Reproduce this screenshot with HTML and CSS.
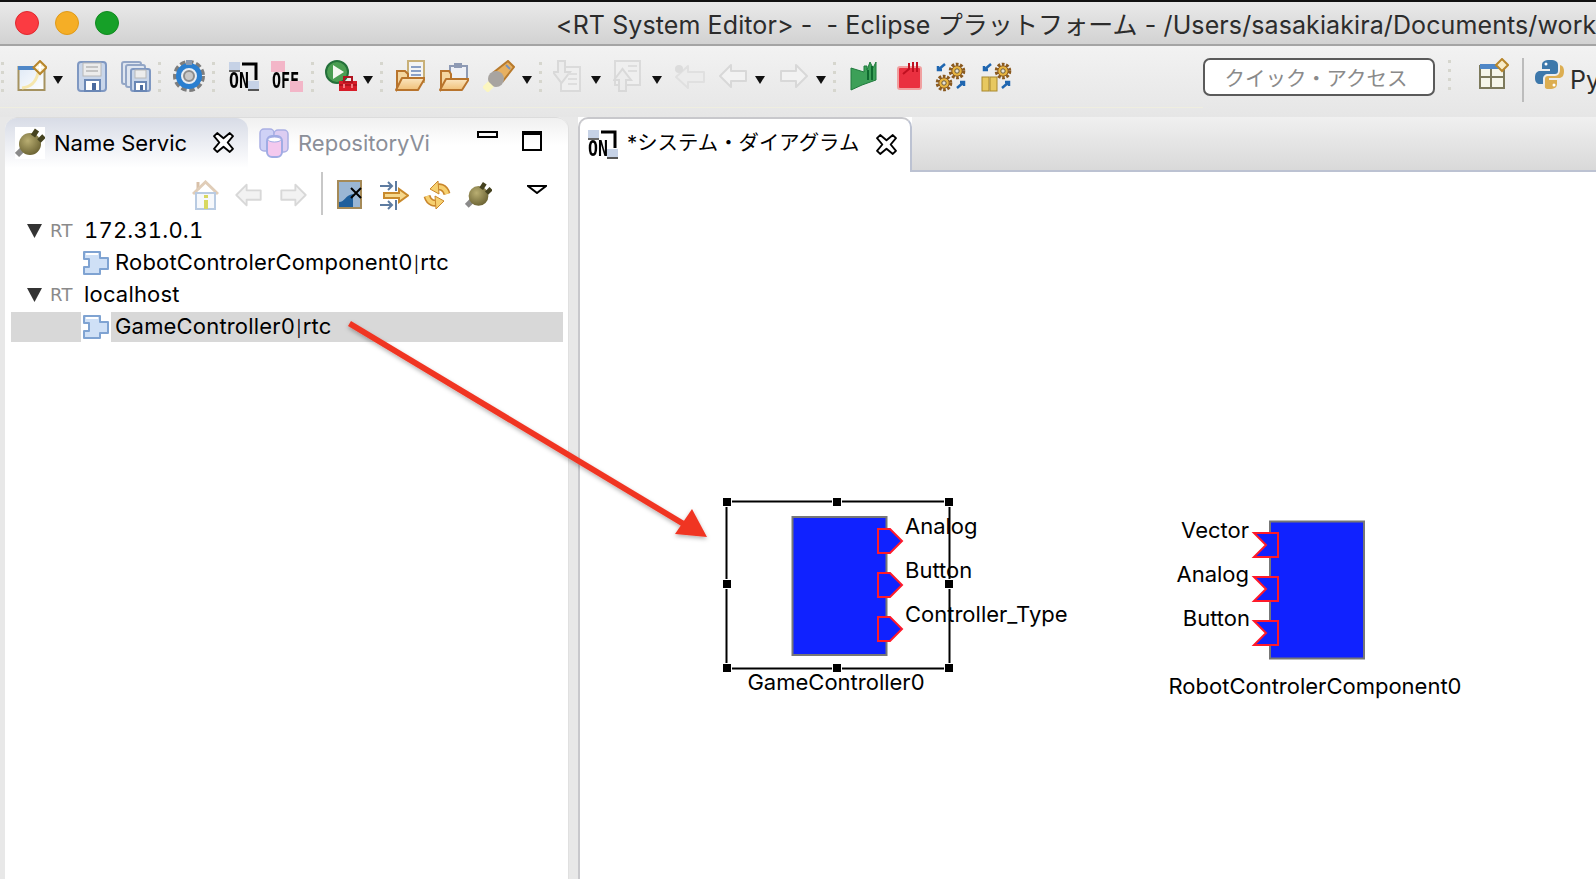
FILE: index.html
```html
<!DOCTYPE html>
<html lang="ja">
<head>
<meta charset="utf-8">
<title>RT System Editor</title>
<link rel="stylesheet" href="styles.css">
</head>
<body>
<svg class="sprite" width="0" height="0">
  <defs>
    <linearGradient id="gWin" x1="0" y1="0" x2="1" y2="1"><stop offset="0" stop-color="#dfe9f6"/><stop offset="1" stop-color="#fff"/></linearGradient>
    <linearGradient id="gFold" x1="0" y1="0" x2="0" y2="1"><stop offset="0" stop-color="#fbe6c0"/><stop offset="1" stop-color="#f0c078"/></linearGradient>
    <radialGradient id="gPlug" cx=".4" cy=".35" r=".8"><stop offset="0" stop-color="#b9ae72"/><stop offset="1" stop-color="#5e5628"/></radialGradient>
    <symbol id="close" viewBox="0 0 20 20"><path d="M4 1 10 6 16 1 19 4 14 10 19 16 16 19 10 14 4 19 1 16 6 10 1 4Z" fill="#fff" stroke="#000" stroke-width="1.800" stroke-linejoin="round"/></symbol>
    <symbol id="plug" viewBox="0 0 30 30">
      <path d="M9 20 2 27" stroke="#8a8a8a" stroke-width="6"/>
      <circle cx="15" cy="16" r="11" fill="url(#gPlug)"/>
      <path d="M18 8 22 2M24 13 29 8" stroke="#45421f" stroke-width="5"/>
    </symbol>
    <symbol id="on" viewBox="0 0 30 32">
      <rect x="0" y="2" width="11" height="9" fill="#c6d2e6"/><rect x="0" y="10" width="11" height="2" fill="#666"/>
      <path d="M13 4H27V20" fill="none" stroke="#000" stroke-width="3"/>
      <text transform="translate(0 28) scale(1.100 1.450)" class="icon-text">ON</text>
      <rect x="19" y="21" width="11" height="9" fill="#c6d2e6"/><rect x="19" y="29" width="11" height="2" fill="#555"/>
    </symbol>
    <symbol id="la" viewBox="0 0 30 32"><path d="M13 5 2 16 13 27V21H28V11H13Z" fill="#f2f2f2" stroke="#d8d8d8" stroke-width="2" stroke-linejoin="round"/></symbol>
    <symbol id="ra" viewBox="0 0 30 32"><path d="M17 5 28 16 17 27V21H2V11H17Z" fill="#f2f2f2" stroke="#d8d8d8" stroke-width="2" stroke-linejoin="round"/></symbol>
    <symbol id="comp" viewBox="0 0 28 24">
      <path d="M3 1H19V7H27V18H19V23H3V16H8V8H3Z" fill="#cfe0f6" stroke="#7fa3d2" stroke-width="2" stroke-linejoin="round"/>
      <path d="M5 3H17" stroke="#fff" stroke-width="2"/>
    </symbol>
    <symbol id="rt" viewBox="0 0 26 14"><text x="0" y="13" class="rt-text">RT</text></symbol>
    <symbol id="gear" viewBox="0 0 18 18">
      <circle cx="9" cy="9" r="6.500" fill="none" stroke="#8a5a20" stroke-width="3.600" stroke-dasharray="2.600 1.500"/>
      <circle cx="9" cy="9" r="5.200" fill="#e8b540" stroke="#8a5a20"/>
      <circle cx="9" cy="9" r="2.200" fill="#e8e2d2" stroke="#6b5a3a"/>
    </symbol>
  </defs>
</svg>

<header class="titlebar">
  <div class="lights">
    <span class="light red"></span><span class="light amber"></span><span class="light green"></span>
  </div>
  <div class="title">&lt;RT System Editor&gt; -&nbsp; - Eclipse プラットフォーム - /Users/sasakiakira/Documents/work</div>
</header>

<div class="toolbar">
  <div class="tools">
    <i class="dots m1"></i>
    <svg class="ic w30 m13" viewBox="0 0 30 32"><rect x="1.500" y="7" width="26" height="23" fill="url(#gWin)" stroke="#a5925f" stroke-width="2"/><rect x="1" y="6" width="27" height="4" fill="#4f87c7"/><path d="M5 28C14 27 19 22 21 13" fill="none" stroke="#f6e7ae" stroke-width="3"/><path d="M23 1 29.500 7.500 23 14 16.500 7.500Z" fill="#f8ecc8" stroke="#b8862b" stroke-width="2"/><path d="M23 4V11M19.500 7.500H26.500" stroke="#fff" stroke-width="2"/></svg>
    <i class="drop m6"></i>
    <svg class="ic w30 m14" viewBox="0 0 30 32"><rect x="1" y="2" width="28" height="29" rx="3" fill="#c9d6ea" stroke="#7f98c2" stroke-width="2"/><rect x="6" y="3" width="18" height="13" fill="#ececec" stroke="#b8b8b8"/><path d="M9 7H21M9 11H21" stroke="#c4c4c4" stroke-width="2"/><rect x="8" y="20" width="15" height="11" fill="#fff" stroke="#6a87b5" stroke-width="2"/><rect x="15" y="23" width="4" height="7" fill="#4a6a9e"/></svg>
    <svg class="ic w30 m14" viewBox="0 0 30 32"><rect x="1" y="2" width="19" height="22" rx="2" fill="#dfe6f0" stroke="#93a6c6" stroke-width="2"/><rect x="5" y="5" width="19" height="22" rx="2" fill="#dfe6f0" stroke="#93a6c6" stroke-width="2"/><rect x="10" y="9" width="19" height="22" rx="2" fill="#c9d6ea" stroke="#7f98c2" stroke-width="2"/><rect x="14" y="10" width="11" height="8" fill="#ececec" stroke="#b8b8b8"/><rect x="14" y="22" width="11" height="9" fill="#fff" stroke="#6a87b5" stroke-width="2"/><rect x="19" y="25" width="3" height="5" fill="#4a6a9e"/></svg>
    <i class="dots m7"></i>
    <svg class="ic w32 m12" viewBox="0 0 32 32"><circle cx="16" cy="16" r="13" fill="none" stroke="#7d7d7d" stroke-width="6" stroke-dasharray="5 2.500"/><circle cx="16" cy="16" r="10.500" fill="#e9eef4" stroke="#2a7fd0" stroke-width="5"/><circle cx="16" cy="16" r="5" fill="#c8c8c8" stroke="#8c8c8c" stroke-width="2"/><rect x="13" y="0" width="6" height="5" fill="#8a9ab0"/></svg>
    <i class="dots m7"></i>
    <svg class="ic w30 m14"><use href="#on"/></svg>
    <svg class="ic w32 m12" viewBox="0 0 32 32"><rect x="0" y="1" width="14" height="11" fill="#f3b6c8"/><text transform="translate(1 28) scale(1 1.450)" class="icon-text">OFF</text><rect x="19" y="21" width="13" height="11" fill="#f3b6c8"/></svg>
    <i class="dots m8"></i>
    <svg class="ic w32 m11" viewBox="0 0 32 32"><circle cx="12" cy="12" r="11" fill="#4b9e52" stroke="#24703a" stroke-width="2"/><path d="M8 5 19 12 8 19Z" fill="#f4f8f0"/><rect x="14" y="21" width="18" height="10" fill="#d81c28"/><rect x="19" y="17" width="8" height="5" fill="none" stroke="#b01420" stroke-width="2"/><path d="M14 25H32" stroke="#8a0c14"/><path d="M19 24V28M27 24V28" stroke="#f47a80" stroke-width="2"/></svg>
    <i class="drop m6"></i>
    <i class="dots m7"></i>
    <svg class="ic w30 m12" viewBox="0 0 30 32"><rect x="13" y="1" width="16" height="21" fill="#f4f4f4" stroke="#c8b078" stroke-width="2"/><path d="M16 7H26M16 11H26M16 15H26" stroke="#8aa0c6" stroke-width="2"/><path d="M2 29V11H10L13 14V20H8Z" fill="#f4d6a0" stroke="#b8742c" stroke-width="2"/><path d="M1 30 7 18H30L23 30Z" fill="url(#gFold)" stroke="#b8742c" stroke-width="2" stroke-linejoin="round"/></svg>
    <svg class="ic w30 m14" viewBox="0 0 30 32"><rect x="11" y="6" width="17" height="14" fill="#eef0f6" stroke="#8e9ab4" stroke-width="2"/><rect x="15" y="3" width="8" height="5" fill="#8e9ab4"/><path d="M2 29V11H10L12 14V20H8Z" fill="#f4d6a0" stroke="#b8742c" stroke-width="2"/><path d="M1 30 7 19H30L23 30Z" fill="url(#gFold)" stroke="#b8742c" stroke-width="2" stroke-linejoin="round"/></svg>
    <svg class="ic w32 m14" viewBox="0 0 32 32"><path d="M11 12 25 1 31 7 20 21Z" fill="#e7b060" stroke="#b87a2c" stroke-width="2"/><circle cx="13" cy="19" r="8" fill="#a8a4a0"/><path d="M8 24 2 30" stroke="#fbf6c0" stroke-width="8"/><path d="M23 5 27 9" stroke="#7a93bc" stroke-width="2"/></svg>
    <i class="drop m7"></i>
    <i class="dots m7"></i>
    <svg class="ic w28 m11 pale" viewBox="0 0 28 32"><rect x="8" y="7" width="19" height="24" fill="#f0f0f0" stroke="#d8d8d8" stroke-width="2"/><path d="M5 1H12V12H17L8.500 23 0 12H5Z" fill="#ececec" stroke="#d6d6d6" stroke-width="2"/><path d="M15 14H24M15 19H24M15 24H24" stroke="#dcdcdc" stroke-width="2"/></svg>
    <i class="drop m10"></i>
    <svg class="ic w28 m12 pale" viewBox="0 0 28 32"><rect x="2" y="1" width="25" height="24" fill="#f0f0f0" stroke="#d8d8d8" stroke-width="2"/><path d="M15 6H24M15 11H24" stroke="#dcdcdc" stroke-width="2"/><path d="M6 31V20H1L9.500 9 18 20H13V31Z" fill="#ececec" stroke="#d6d6d6" stroke-width="2"/></svg>
    <i class="drop m11"></i>
    <svg class="ic w32 m11" viewBox="0 0 32 32"><path d="M15 6 3 17 15 28V22H31V12H15Z" fill="#ececec" stroke="#e0e0e0" stroke-width="2" stroke-linejoin="round"/><circle cx="6" cy="9" r="4" fill="#dcdcdc"/></svg>
    <svg class="ic w30 m13"><use href="#la"/></svg>
    <i class="drop m7"></i>
    <svg class="ic w30 m14"><use href="#ra"/></svg>
    <i class="drop m7"></i>
    <i class="dots m7"></i>
    <svg class="ic w28 m14" viewBox="0 0 28 32"><path d="M1 8 14 12V6H17V10L20 2 23 8 26 2V20L12 25 1 30Z" fill="#3ca058" stroke="#1f7a3c"/><path d="M18 10V20M22 6V20" stroke="#0f6a30" stroke-width="2"/></svg>
    <svg class="ic w26 m19" viewBox="0 0 26 32"><rect x="1" y="7" width="23" height="22" rx="2" fill="#ea3040" stroke="#f0a0a0" stroke-width="2"/><path d="M6 14 12 9V3M16 12V2M20 12V2" fill="none" stroke="#c01020" stroke-width="2"/></svg>
    <svg class="ic w32 m12" viewBox="0 0 32 32"><use href="#gear" x="13" y="2" width="18" height="18"/><use href="#gear" x="0" y="14" width="18" height="18"/><path d="M10 4 3 10M3 6V10H7M22 28 29 22M29 26V22H25" fill="none" stroke="#1f66b0" stroke-width="2.500"/></svg>
    <svg class="ic w32 m14" viewBox="0 0 32 32"><use href="#gear" x="13" y="2" width="18" height="18"/><rect x="1" y="17" width="7" height="14" fill="#e7c860" stroke="#a8882c"/><rect x="9" y="17" width="7" height="14" fill="#e7c860" stroke="#a8882c"/><path d="M10 4 3 10M3 6V10H7M21 28 28 22M28 26V22H24" fill="none" stroke="#1f66b0" stroke-width="2.500"/></svg>
  </div>
  <div class="tools-right">
    <div class="search">クイック・アクセス</div>
    <i class="dots m13"></i>
    <svg class="ic w30 m28" viewBox="0 0 30 32"><rect x="1" y="8" width="24" height="22" fill="#f6f6ea" stroke="#7d7a5c" stroke-width="2"/><rect x="1" y="6" width="24" height="5" fill="#4f87c7"/><path d="M1 19H25M12 11V30" stroke="#7d7a5c" stroke-width="2"/><path d="M23 1 29 7 23 13 17 7Z" fill="#f8ecc8" stroke="#b8862b" stroke-width="2"/></svg>
    <i class="vsep"></i>
    <svg class="ic w30 m11" viewBox="0 0 30 32"><path d="M15 2C9 2 7 4 7 7V11H15V13H5C2 13 0 15 0 20 0 24 2 26 5 26H8V21C8 18 10 16 13 16H20C22 16 23 15 23 13V7C23 4 21 2 15 2Z" fill="#3d78ab"/><path d="M14 31C20 31 22 29 22 26V22H14V20H24C27 20 29 18 29 13 29 9 27 7 24 7H25V12C25 15 23 18 20 18H13C11 18 10 19 10 21V26C10 29 9 31 14 31Z" fill="#dcae52"/><circle cx="11" cy="6" r="1.500" fill="#fff"/><circle cx="19" cy="27" r="1.500" fill="#fff"/></svg>
    <span class="py">Py</span>
  </div>
</div>

<main class="workspace">
  <section class="left-panel">
    <div class="left-tabs">
      <div class="tab-active">
        <svg class="ic w30 plug-box"><use href="#plug"/></svg>
        <span class="tab-name">Name Servic</span>
        <svg class="x-icon"><use href="#close"/></svg>
      </div>
      <svg class="ic w30 repo" viewBox="0 0 30 30"><rect x="1" y="1" width="14" height="22" rx="4" fill="#cfd2f6" stroke="#aab0e4" stroke-width="1.500"/><rect x="15" y="2" width="14" height="22" rx="4" fill="#dccdf2" stroke="#aab0e4" stroke-width="1.500"/><rect x="8" y="8" width="15" height="21" rx="5" fill="#f4c9ee" stroke="#a0ace4" stroke-width="2"/><ellipse cx="15.500" cy="11.500" rx="6.500" ry="2.500" fill="#fff" stroke="#a0ace4"/></svg>
      <span class="tab-other">RepositoryVi</span>
      <i class="min-btn"></i>
      <i class="max-btn"></i>
    </div>
    <div class="view-bar">
      <svg class="vi w27 home" viewBox="0 0 27 30"><path d="M6 2V10" stroke="#d8c0a8" stroke-width="3"/><path d="M1 14 13.500 2 26 14" fill="none" stroke="#e0cdb8" stroke-width="3"/><rect x="4" y="13" width="19" height="16" fill="#f6f8fb" stroke="#b9cbe2" stroke-width="2"/><rect x="12" y="15" width="4" height="3" fill="#d8d860"/><rect x="12" y="20" width="4" height="9" fill="#d8d860"/></svg>
      <svg class="vi w29 m15"><use href="#la"/></svg>
      <svg class="vi w29 m16"><use href="#ra"/></svg>
      <i class="view-sep"></i>
      <svg class="vi w25 m14" viewBox="0 0 25 30"><rect x="1" y="1" width="23" height="27" fill="#9ab6d4" stroke="#a58a58" stroke-width="2"/><path d="M2 27V22C8 22 8 15 16 14V27Z" fill="#1f5f9c"/><path d="M14 8 24 18M24 8 14 18" stroke="#000" stroke-width="2"/></svg>
      <svg class="vi w30 m17" viewBox="0 0 30 30"><path d="M1 6H13M9 2 13 6 9 10M1 25H13M9 21 13 25 9 29" fill="none" stroke="#5d7ba0" stroke-width="2"/><path d="M17 1V11M17 20V30" stroke="#5d7ba0" stroke-width="2"/><path d="M5 13H20V9L29 15.500 20 22V18H5Z" fill="#f6d88c" stroke="#c98a2c" stroke-width="2"/></svg>
      <svg class="vi w28 m14" viewBox="0 0 28 30"><path d="M12 9C16 5 22 7 24 14" fill="none" stroke="#c9862c" stroke-width="7"/><path d="M12 9C16 5 22 7 24 14" fill="none" stroke="#f6d070" stroke-width="4"/><path d="M15 1 7 9 16 14Z" fill="#f6d070" stroke="#c9862c"/><path d="M16 21C12 25 6 23 4 16" fill="none" stroke="#c9862c" stroke-width="7"/><path d="M16 21C12 25 6 23 4 16" fill="none" stroke="#f6d070" stroke-width="4"/><path d="M13 29 21 21 12 16Z" fill="#f6d070" stroke="#c9862c"/></svg>
      <svg class="vi w27 m14"><use href="#plug"/></svg>
      <svg class="chev" viewBox="0 0 20 9"><path d="M1 1H19L10 8Z" fill="#fff" stroke="#000" stroke-width="2"/></svg>
    </div>
    <ul class="tree">
      <li class="row">
        <i class="twist"></i><svg class="rt-icon"><use href="#rt"/></svg><span class="host">172.31.0.1</span>
      </li>
      <li class="row child">
        <svg class="comp-icon"><use href="#comp"/></svg><span class="name">RobotControlerComponent0<span class="pipe">|</span>rtc</span>
      </li>
      <li class="row">
        <i class="twist"></i><svg class="rt-icon"><use href="#rt"/></svg><span class="host">localhost</span>
      </li>
      <li class="row child selected">
        <svg class="comp-icon"><use href="#comp"/></svg><span class="name">GameController0<span class="pipe">|</span>rtc</span>
      </li>
    </ul>
  </section>

  <section class="right-panel">
    <div class="right-tabs">
      <div class="editor-tab">
        <svg class="ic w30"><use href="#on"/></svg>
        <span class="editor-name">*システム・ダイアグラム</span>
        <svg class="x-icon"><use href="#close"/></svg>
      </div>
      <div class="tab-fill"></div>
    </div>
    <div class="canvas">
      <svg class="diagram" viewBox="579 172 1017 707">
        <rect x="792.500" y="517" width="94" height="138" class="block"/>
        <g class="port"><path d="M878 529H890L902 541 890 553H878Z"/><path d="M878 573H890L902 585 890 597H878Z"/><path d="M878 617H890L902 629 890 641H878Z"/></g>
        <rect x="726.500" y="501.500" width="223" height="167" class="sel"/>
        <g class="handles">
          <rect x="723" y="498" width="8" height="8"/><rect x="833" y="498" width="8" height="8"/><rect x="945" y="498" width="8" height="8"/>
          <rect x="723" y="580" width="8" height="8"/><rect x="945" y="580" width="8" height="8"/>
          <rect x="723" y="664" width="8" height="8"/><rect x="833" y="664" width="8" height="8"/><rect x="945" y="664" width="8" height="8"/>
        </g>
        <text x="905" y="534" class="lbl">Analog</text>
        <text x="905" y="578" class="lbl">Button</text>
        <text x="905" y="622" class="lbl">Controller_Type</text>
        <text x="836" y="690" class="lbl mid">GameController0</text>

        <rect x="1270" y="521.500" width="94" height="137" class="block"/>
        <g class="port"><path d="M1254 533H1278V557H1254L1266 545Z"/><path d="M1254 577H1278V601H1254L1266 589Z"/><path d="M1254 621H1278V645H1254L1266 633Z"/></g>
        <text x="1249" y="538" class="lbl end">Vector</text>
        <text x="1249" y="582" class="lbl end">Analog</text>
        <text x="1250" y="626" class="lbl end">Button</text>
        <text x="1315" y="694" class="lbl mid">RobotControlerComponent0</text>
      </svg>
    </div>
  </section>
</main>

<svg class="overlay" viewBox="0 0 1596 879">
  <defs><filter id="soft" x="-10%" y="-10%" width="120%" height="120%"><feDropShadow dx="0" dy="2" stdDeviation="2" flood-color="#000" flood-opacity=".3"/></filter></defs>
  <g filter="url(#soft)" fill="#f03524">
    <path d="M351 321 686 522 683 527 348 326Z"/>
    <path d="M707 537 675 534 692 509Z"/>
  </g>
</svg>
</body>
</html>
```
FILE: styles.css
```css
* { box-sizing: border-box; }
html, body { margin: 0; height: 100%; }
body {
  position: relative;
  width: 1596px;
  height: 879px;
  overflow: hidden;
  background: #e8e8e8;
  font-family: Inter, "Noto Sans CJK JP", sans-serif;
  color: #111;
}
.sprite { position: absolute; }
i { display: block; font-style: normal; flex: none; }

/* Title bar */
.titlebar {
  height: 46px;
  display: flex;
  align-items: center;
  border-top: 2px solid #111;
  border-bottom: 2px solid #a4a4a4;
  background: linear-gradient(#e9e9e9, #d2d2d2);
  overflow: hidden;
  white-space: nowrap;
}
.lights { display: flex; gap: 16px; padding-left: 15px; width: 556px; flex: none; }
.light { width: 24px; height: 24px; border-radius: 50%; }
.red { background: #fb3b42; border: 1px solid #e0282e; }
.amber { background: #f5ae26; border: 1px solid #e09a18; }
.green { background: #16a028; border: 1px solid #108a20; }
.title { font-size: 25px; color: #2c2c2c; letter-spacing: .1px; }

/* Toolbar */
.toolbar {
  height: 71px;
  display: flex;
  align-items: flex-start;
  background: linear-gradient(#f2f2f2, #e6e6e6);
}
.tools {
  flex: 1;
  height: 62px;
  padding-top: 14px;
  display: flex;
  align-items: flex-start;
  border-bottom: 1px solid #efeee0;
}
.tools > *, .tools-right > * { flex: none; }
.tools-right {
  width: 393px;
  height: 62px;
  padding-top: 12px;
  display: flex;
  align-items: flex-start;
  overflow: hidden;
  white-space: nowrap;
}
.ic { display: block; height: 32px; }
.vi { display: block; height: 30px; margin-top: 8px; flex: none; }
svg.ic, svg.vi { filter: blur(.35px); }
.w25 { width: 25px; } .w26 { width: 26px; } .w27 { width: 27px; } .w28 { width: 28px; } .w29 { width: 29px; }
.w30 { width: 30px; } .w32 { width: 32px; }
.m1 { margin-left: 1px; } .m6 { margin-left: 6px; } .m7 { margin-left: 7px; } .m8 { margin-left: 8px; }
.m10 { margin-left: 10px; } .m11 { margin-left: 11px; } .m12 { margin-left: 12px; } .m13 { margin-left: 13px; }
.m14 { margin-left: 14px; } .m15 { margin-left: 15px; } .m16 { margin-left: 16px; } .m17 { margin-left: 17px; }
.m19 { margin-left: 19px; } .m28 { margin-left: 28px; }
.drop {
  width: 10px;
  height: 8px;
  margin-top: 16px;
  background: #111;
  clip-path: polygon(0 0, 100% 0, 50% 100%);
}
.dots {
  width: 3px;
  height: 30px;
  margin-top: 2px;
  background: radial-gradient(circle at 1.5px 1.5px, #d6d6ce 1.5px, transparent 1.6px) 0 0 / 3px 9px repeat-y;
}
.pale { opacity: .85; }
.search {
  width: 232px;
  height: 38px;
  display: flex;
  align-items: center;
  justify-content: center;
  padding-right: 6px;
  background: #fff;
  border: 2px solid #5a5a5a;
  border-radius: 7px;
  font-size: 20.5px;
  color: #8a8a8a;
}
.vsep { width: 2px; height: 44px; margin-left: 13px; background: #bcbcbc; }
.py { margin-left: 5px; font-size: 25px; line-height: 44px; color: #2c2c2c; }

/* Workspace */
.workspace {
  height: 762px;
  display: flex;
  padding-left: 5px;
  gap: 9px;
}
.left-panel {
  width: 564px;
  background: #fff;
  border-radius: 12px 12px 0 0;
  border-right: 1px solid #e0e0e0;
}
.left-tabs {
  height: 50px;
  display: flex;
  align-items: center;
  border-radius: 12px 12px 0 0;
  background: linear-gradient(#f0f0f0, #fff 55%);
  border-top: 1px solid #dcdcdc;
}
.tab-active {
  width: 243px;
  height: 50px;
  display: flex;
  align-items: center;
  padding-left: 10px;
  border-radius: 12px 12px 0 0;
  background: linear-gradient(#d8dce6, #fff);
  flex: none;
}
.plug-box { background: #fff; }
.tab-name { margin-left: 9px; font-size: 22px; color: #000; }
.x-icon { display: block; width: 21px; height: 21px; flex: none; }
.tab-active .x-icon { margin-left: auto; margin-right: 14px; }
.repo { margin-left: 11px; height: 30px; }
.tab-other { margin-left: 9px; font-size: 22px; color: #8b8f99; }
.min-btn { width: 21px; height: 7px; border: 2px solid #000; margin: 0 0 16px auto; }
.max-btn { width: 20px; height: 20px; border: 2px solid #000; border-top-width: 4px; margin: 0 26px 4px 24px; }
.view-bar {
  height: 48px;
  padding: 5px 0 0 187px;
  display: flex;
  align-items: flex-start;
}
.view-sep { width: 2px; height: 43px; margin-left: 13px; background: #c8c8c8; }
.chev { display: block; width: 20px; height: 9px; margin: 13px 0 0 35px; flex: none; }
.tree { list-style: none; margin: 0; padding: 0 5px 0 6px; }
.row {
  height: 32px;
  display: flex;
  align-items: center;
  padding: 0 0 2px 16px;
  font-size: 22px;
  letter-spacing: .18px;
  font-variant-numeric: tabular-nums;
  color: #000;
  white-space: nowrap;
}
.twist {
  width: 15px;
  height: 14px;
  margin-top: 2px;
  background: #333;
  clip-path: polygon(0 0, 100% 0, 50% 100%);
}
.rt-icon { display: block; width: 26px; height: 14px; margin: 2px 0 0 8px; flex: none; }
.host { margin-left: 8px; }
.child { padding-left: 70px; }
.comp-icon { display: block; width: 28px; height: 24px; margin-top: 2px; flex: none; }
.name { margin-left: 6px; }
.pipe { font-size: 16px; margin: 0 1px; }
.selected {
  background: linear-gradient(to right, #d8d8d8 70px, #fff 70px, #fff 100px, #d8d8d8 100px) 0 1px / 100% 30px no-repeat;
}
.icon-text { font: 700 15px "DejaVu Sans Mono", monospace; fill: #000; }
.rt-text { font: 400 18px "DejaVu Sans", sans-serif; fill: #8a8a8a; }

/* Editor */
.right-panel { flex: 1; display: flex; flex-direction: column; background: #fff; }
.right-tabs { height: 55px; display: flex; flex: none; }
.editor-tab {
  width: 334px;
  display: flex;
  align-items: center;
  padding: 0 0 3px 8px;
  background: #fff;
  border: 2px solid #c8c8cc;
  border-bottom: 0;
  border-right-color: #bcc2d2;
  border-radius: 10px 10px 0 0;
  flex: none;
}
.editor-name { margin: 0 0 6px 9px; font-size: 20.4px; color: #000; white-space: nowrap; }
.editor-tab .x-icon { margin-left: auto; margin-right: 13px; }
.tab-fill {
  flex: 1;
  background: linear-gradient(#f0f0f0, #d9d9d9);
  border-bottom: 2px solid #bcc2d2;
}
.canvas { position: relative; flex: 1; border-left: 2px solid #c8c8cc; }
.diagram { position: absolute; left: -1px; top: 0; width: 1017px; height: 707px; }
.block { fill: #1022ff; stroke: #777; stroke-width: 2; }
.port path { fill: #1022ff; stroke: #ff1a2a; stroke-width: 2; }
.sel { fill: none; stroke: #000; stroke-width: 2; }
.handles rect { fill: #000; stroke: #fff; stroke-width: 2; paint-order: stroke; }
.lbl { font: 400 22px Inter, sans-serif; fill: #000; }
.mid { text-anchor: middle; }
.end { text-anchor: end; }
.overlay { position: absolute; left: 0; top: 0; width: 1596px; height: 879px; pointer-events: none; }
```
